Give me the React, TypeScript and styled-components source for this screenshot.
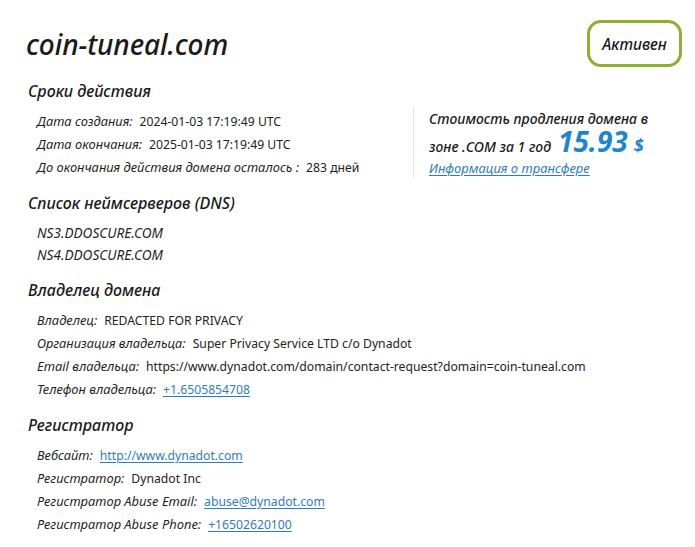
import React from "react";
import styled, { createGlobalStyle } from "styled-components";

const Global = createGlobalStyle`
  html, body { margin: 0; padding: 0; background: #fff; }
  body { font-family: "Noto Sans", "Open Sans", sans-serif; color: #1c1c1c; }
`;

const Page = styled.div`
  width: 695px;
  height: 547px;
  box-sizing: border-box;
  padding: 20px 13px 0 28px;
  overflow: hidden;
`;

const Header = styled.header`
  display: flex;
  align-items: center;
  justify-content: space-between;
  height: 47px;
`;

const Title = styled.h1`
  margin: 0 0 0 -2px;
  font-size: 28px;
  font-style: italic;
  font-weight: 500;
  color: #1a1a1a;
  letter-spacing: -0.1px;
`;

const Badge = styled.div`
  box-sizing: border-box;
  width: 95px;
  height: 47px;
  border: 3px solid #8db033;
  border-radius: 14px;
  display: flex;
  align-items: center;
  justify-content: center;
  font-size: 15.5px;
  font-style: italic;
  font-weight: 500;
  color: #1a1a1a;
`;

const Section = styled.section`
  margin-top: 12px;
`;

const Heading = styled.h2`
  margin: 0;
  font-size: 16px;
  line-height: 24px;
  font-style: italic;
  font-weight: 500;
  color: #1a1a1a;
`;

const Body = styled.div<{ $split?: boolean }>`
  margin-top: 7px;
  display: grid;
  grid-template-columns: ${(p) => (p.$split ? "385px 1fr" : "1fr")};
  align-items: start;
`;

const List = styled.div<{ $step?: number }>`
  padding-left: 9px;
  display: flex;
  flex-direction: column;
  & > * { line-height: ${(p) => p.$step ?? 23}px; }
`;

const Row = styled.div`
  font-size: 12.9px;
  white-space: nowrap;
`;

const Label = styled.span<{ $caps?: boolean }>`
  font-size: ${(p) => (p.$caps ? 13.6 : 12.9)}px;
  line-height: 1;
  font-style: italic;
  color: #1f1f1f;
  margin-right: 7px;
`;

const Value = styled.span`
  font-size: 12.2px;
  line-height: 1;
  color: #222;
`;

const Link = styled.a`
  font-size: 12.2px;
  line-height: 1;
  color: #2f7db8;
  text-decoration: underline;
  text-underline-offset: 2px;
`;

const Price = styled.aside`
  margin-top: -2px;
  border-left: 1px solid #e4e4e4;
  padding: 0 0 0 15px;
  height: 70px;
`;

const PriceText = styled.div<{ $gap?: number }>`
  margin-top: ${(p) => p.$gap ?? 0}px;
  font-size: 14px;
  font-style: italic;
  font-weight: 500;
  line-height: 22px;
  color: #1a1a1a;
  white-space: nowrap;
`;

/* the big figure sits on the text baseline without growing the line */
const Amount = styled.span`
  font-size: 28px;
  font-weight: 700;
  font-style: italic;
  color: #1e86c8;
  margin-left: 7px;
  line-height: 10px;
`;

const Currency = styled.span`
  font-size: 18px;
  font-weight: 700;
  font-style: italic;
  color: #1e86c8;
  margin-left: 6px;
  line-height: 10px;
`;

const PriceLink = styled(Link)`
  display: block;
  font-size: 13px;
  font-style: italic;
  line-height: 20px;
`;

type Item = { label: string; value: string; href?: boolean };

const Items = ({ items }: { items: Item[] }) => (
  <>
    {items.map((it) => (
      <Row key={it.label}>
        <Label>{it.label}</Label>
        {it.href ? <Link href="#">{it.value}</Link> : <Value>{it.value}</Value>}
      </Row>
    ))}
  </>
);

export default function App() {
  return (
    <Page>
      <Global />
      <Header>
        <Title>coin-tuneal.com</Title>
        <Badge>Активен</Badge>
      </Header>

      <Section>
        <Heading>Сроки действия</Heading>
        <Body $split>
          <List>
            <Items
              items={[
                { label: "Дата создания:", value: "2024-01-03 17:19:49 UTC" },
                { label: "Дата окончания:", value: "2025-01-03 17:19:49 UTC" },
                { label: "До окончания действия домена осталось :", value: "283 дней" },
              ]}
            />
          </List>
          <Price>
            <PriceText>Стоимость продления домена в</PriceText>
            <PriceText $gap={6}>
              зоне .COM за 1 год<Amount>15.93</Amount>
              <Currency>$</Currency>
            </PriceText>
            <PriceLink href="#">Информация о трансфере</PriceLink>
          </Price>
        </Body>
      </Section>

      <Section>
        <Heading>Список неймсерверов (DNS)</Heading>
        <Body>
          <List $step={22}>
            <Row><Label $caps>NS3.DDOSCURE.COM</Label></Row>
            <Row><Label $caps>NS4.DDOSCURE.COM</Label></Row>
          </List>
        </Body>
      </Section>

      <Section>
        <Heading>Владелец домена</Heading>
        <Body>
          <List>
            <Items
              items={[
                { label: "Владелец:", value: "REDACTED FOR PRIVACY" },
                { label: "Организация владельца:", value: "Super Privacy Service LTD c/o Dynadot" },
                {
                  label: "Email владельца:",
                  value: "https://www.dynadot.com/domain/contact-request?domain=coin-tuneal.com",
                },
                { label: "Телефон владельца:", value: "+1.6505854708", href: true },
              ]}
            />
          </List>
        </Body>
      </Section>

      <Section>
        <Heading>Регистратор</Heading>
        <Body>
          <List>
            <Items
              items={[
                { label: "Вебсайт:", value: "http://www.dynadot.com", href: true },
                { label: "Регистратор:", value: "Dynadot Inc" },
                { label: "Регистратор Abuse Email:", value: "abuse@dynadot.com", href: true },
                { label: "Регистратор Abuse Phone:", value: "+16502620100", href: true },
              ]}
            />
          </List>
        </Body>
      </Section>
    </Page>
  );
}
